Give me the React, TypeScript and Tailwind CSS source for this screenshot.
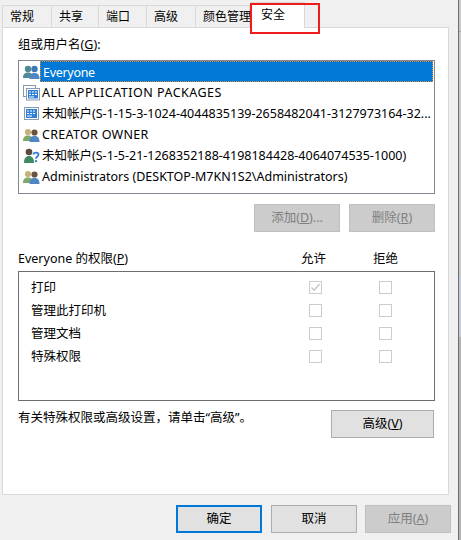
import React from "react";

function UserIcon({ kind }: { kind: string }) {
  if (kind === "everyone") {
    return (
      <svg width="17" height="16" viewBox="0 0 17 16" className="shrink-0">
        <circle cx="5" cy="5" r="3.200" fill="#4d8a96" />
        <path d="M0 14c0-4 2-5.500 5-5.500s5 1.500 5 5.500z" fill="#4d8a96" />
        <circle cx="11.500" cy="5" r="3.200" fill="#3f76b4" />
        <path d="M6.500 15c0-4.500 2-6 5-6s5 1.500 5 6z" fill="#4f86c4" />
      </svg>
    );
  }
  if (kind === "app") {
    return (
      <svg width="17" height="16" viewBox="0 0 17 16" className="shrink-0">
        <rect x="0.500" y="0.500" width="12" height="11" fill="#fff" stroke="#8a9bb0" />
        <rect x="3.500" y="3.500" width="13" height="11.500" fill="#fff" stroke="#8a9bb0" />
        <rect x="5" y="5" width="10" height="8.500" fill="#2f7fd6" />
        <path d="M6 7h2M9 7h2M12 7h2M6 9.500h2M9 9.500h2M12 9.500h2M6 12h5" stroke="#fff" strokeWidth="1" />
      </svg>
    );
  }
  if (kind === "sid") {
    return (
      <svg width="17" height="16" viewBox="0 0 17 16" className="shrink-0">
        <rect x="1.500" y="1.500" width="14" height="12" fill="#fff" stroke="#8a9bb0" />
        <rect x="3" y="3" width="11" height="9" fill="#2f7fd6" />
        <path d="M4 5h2M7 5h2M10 5h2M4 7.500h2M7 7.500h2M10 7.500h2M4 10h5" stroke="#fff" strokeWidth="1" />
      </svg>
    );
  }
  if (kind === "unknown") {
    return (
      <svg width="17" height="16" viewBox="0 0 17 16" className="shrink-0">
        <circle cx="6" cy="4" r="3.300" fill="#5c4a3c" />
        <path d="M1 15c0-5 2-7 5-7s5 2 5 7z" fill="#3f8a62" />
        <path d="M10.500 6.500c0-2.500 5-2.500 5 0 0 2-2.500 2-2.500 4.200" fill="none" stroke="#2f7fd6" strokeWidth="1.800" />
        <rect x="12" y="12.200" width="2" height="2" fill="#2f7fd6" />
      </svg>
    );
  }
  return (
    <svg width="17" height="16" viewBox="0 0 17 16" className="shrink-0">
      <circle cx="5" cy="5" r="3.100" fill="#c9b27a" />
      <path d="M0 14c0-4 2-5.500 5-5.500s5 1.500 5 5.500z" fill="#7fa86a" />
      <circle cx="11.500" cy="5.500" r="3.100" fill="#6b5240" />
      <path d="M6.500 15c0-4.500 2-6 5-6s5 1.500 5 6z" fill="#4f86c4" />
    </svg>
  );
}

function Tab({ label, w }: { label: string; w: string }) {
  return (
    <div className={`${w} h-[22px] mt-[5px] border border-b-0 border-l-0 border-[#d9d9d9] first:border-l bg-[#f0f0f0] pl-[7px] leading-[22px] text-[12px] whitespace-nowrap`}>
      {label}
    </div>
  );
}

const rows: { kind: string; text: string; cls?: string; selected?: boolean }[] = [
  { kind: "everyone", text: "Everyone", selected: true, cls: "tracking-[-0.3px]" },
  { kind: "app", text: "ALL APPLICATION PACKAGES", cls: "tracking-[0.5px]" },
  { kind: "sid", text: "未知帐户(S-1-15-3-1024-4044835139-2658482041-3127973164-32..." },
  { kind: "owner", text: "CREATOR OWNER", cls: "tracking-[0.3px]" },
  { kind: "unknown", text: "未知帐户(S-1-5-21-1268352188-4198184428-4064074535-1000)" },
  { kind: "owner", text: "Administrators (DESKTOP-M7KN1S2\\Administrators)" },
];

function Check({ checked }: { checked?: boolean }) {
  return (
    <div className="w-[13px] h-[13px] border border-[#cccccc] bg-white flex items-center justify-center">
      {checked && (
        <svg width="11" height="11" viewBox="0 0 11 11">
          <path d="M1.500 5.500L4.200 8.200L9.500 2" fill="none" stroke="#c4c4c4" strokeWidth="1.300" />
        </svg>
      )}
    </div>
  );
}

const perms: { label: string; allow?: boolean }[] = [
  { label: "打印", allow: true },
  { label: "管理此打印机" },
  { label: "管理文档" },
  { label: "特殊权限" },
];

function Btn({ children, className }: { children: React.ReactNode; className: string }) {
  return (
    <div className={`h-[28px] flex items-center justify-center border text-[12.5px] ${className}`}>{children}</div>
  );
}

export default function App() {
  return (
    <div
      className="w-[461px] h-[540px] bg-[#f0f0f0] overflow-hidden relative text-[12.5px] text-black flex"
      style={{ fontFamily: '"Noto Sans", "Noto Sans CJK SC", sans-serif' }}
    >
      <div className="w-[458px] pl-[2px] flex flex-col shrink-0">
        <div className="flex h-[27px] w-[447px] shrink-0">
          <Tab label="常规" w="w-[50px]" />
          <Tab label="共享" w="w-[47px]" />
          <Tab label="端口" w="w-[48px]" />
          <Tab label="高级" w="w-[49px]" />
          <Tab label="颜色管理" w="w-[54px]" />
          <div className="w-[55px] h-[26px] mt-[2px] relative z-10 bg-white border border-b-0 border-[#d9d9d9] pl-[10px] leading-[24px] text-[12px]">安全</div>
        </div>
        <div className="w-[447px] h-[468px] bg-white border border-[#d9d9d9] pl-[15px] flex flex-col">
          <div className="h-[18px] mt-[8px] leading-[18px]">
            组或用户名(<span className="underline">G</span>):
          </div>
          <div className="mt-[6px] h-[134px] w-[417px] border border-[#828790] pl-[4px] pr-[1px]">
            {rows.map((r) => (
              <div key={r.text} className="h-[21px] flex items-center gap-[2px] whitespace-nowrap">
                <UserIcon kind={r.kind} />
                <span
                  className={
                    r.selected
                      ? `h-[21px] flex-1 -ml-[2px] pl-[2px] leading-[21px] bg-[#0078d7] text-white border border-dotted border-[#e08a3c] ${r.cls ?? ""}`
                      : `pt-[2px] ${r.cls ?? ""}`
                  }
                >
                  {r.text}
                </span>
              </div>
            ))}
          </div>
          <div className="flex justify-end gap-[9px] mt-[10px] w-[417px]">
            <Btn className="w-[86px] bg-[#cccccc] border-[#bfbfbf] text-[#7f7f7f]">
              <span>添加(<span className="underline">D</span>)...</span>
            </Btn>
            <Btn className="w-[86px] bg-[#cccccc] border-[#bfbfbf] text-[#7f7f7f]">
              <span>删除(<span className="underline">R</span>)</span>
            </Btn>
          </div>
          <div className="flex mt-[18px] h-[18px] leading-[18px] w-[417px] whitespace-nowrap">
            <div className="flex-1">
              Everyone 的权限(<span className="underline">P</span>)
            </div>
            <div className="w-[25px] mr-[47px]">允许</div>
            <div className="w-[25px] mr-[37px]">拒绝</div>
          </div>
          <div className="mt-[3px] h-[130px] w-[417px] border border-[#6e6e6e] pt-[4px] pl-[12px]">
            {perms.map((p) => (
              <div key={p.label} className="h-[23px] flex items-center">
                <div className="flex-1 pt-[2px]">{p.label}</div>
                <div className="mr-[57px]"><Check checked={p.allow} /></div>
                <div className="mr-[42px]"><Check /></div>
              </div>
            ))}
          </div>
          <div className="flex items-start mt-[9px] w-[417px]">
            <div className="flex-1 leading-[18px] -mt-[1px]">有关特殊权限或高级设置，请单击“高级”。</div>
            <Btn className="w-[103px] mr-[1px] bg-[#e1e1e1] border-[#adadad]">
              <span>高级(<span className="underline">V</span>)</span>
            </Btn>
          </div>
        </div>
        <div className="flex w-[449px] justify-end mt-[10px]">
          <Btn className="w-[86px] bg-[#e1e1e1] border-2 border-[#0078d7]">确定</Btn>
          <Btn className="w-[86px] ml-[9px] bg-[#e1e1e1] border-[#adadad]">取消</Btn>
          <Btn className="w-[86px] ml-[8px] bg-[#cccccc] border-[#bfbfbf] text-[#7f7f7f]">
            <span>应用(<span className="underline">A</span>)</span>
          </Btn>
        </div>
      </div>
      <div className="w-[3px] border-l border-[#707070] flex flex-col">
        <div className="h-[31px] bg-[#c8c8c8]" />
        <div className="h-[1px] bg-[#a8a8a8]" />
        <div className="h-[244px] bg-[#c8c8c8]" />
        <div className="h-[61px] bg-[#c3cbd6]" />
        <div className="flex-1 bg-[#b4b4b4]" />
      </div>
      <div className="absolute left-[250px] top-[3px] w-[70px] h-[31px] border-[2px] border-[#f01c1c] z-20" />
    </div>
  );
}
